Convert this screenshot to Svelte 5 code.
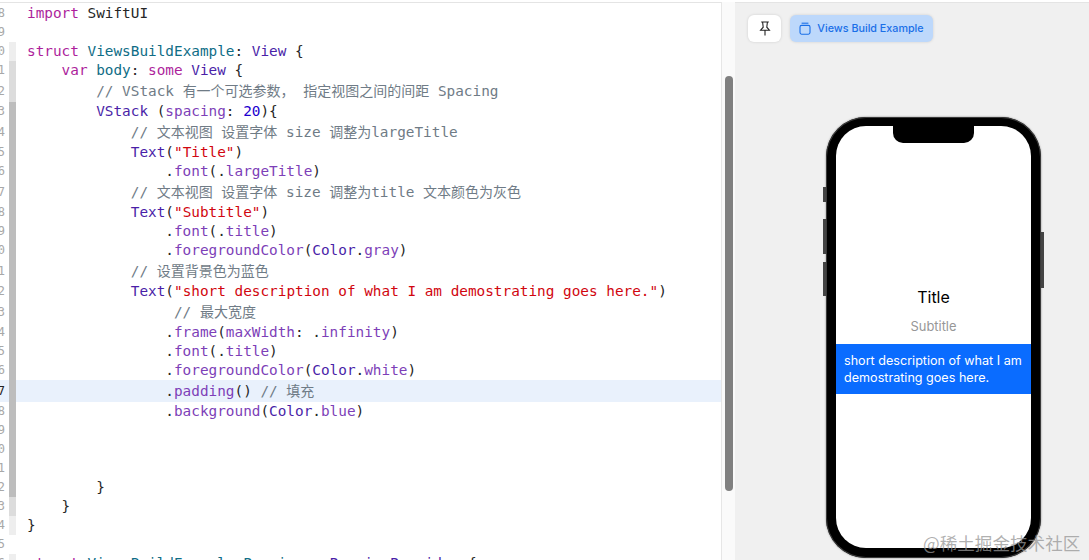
<script>
    const K = 'kw', T = 'ty', N = 'nm', M = 'me', C = 'cm', H = 'cm hz', S = 'st', D = 'dg', P = 'pl';

    // each row: fold level, tall (CJK comment rows render taller), tokens
    const rows = [
        { level: 0, toks: [[K, 'import'], [P, ' SwiftUI']] },
        { level: 0, toks: [] },
        { level: 1, toks: [[K, 'struct'], [P, ' '], [T, 'ViewsBuildExample'], [P, ': '], [N, 'View'], [P, ' {']] },
        { level: 2, toks: [[P, '    '], [K, 'var'], [P, ' '], [T, 'body'], [P, ': '], [K, 'some'], [P, ' '], [N, 'View'], [P, ' {']] },
        { level: 2, tall: true, toks: [[C, '        // VStack '], [H, '有一个可选参数，'], [C, ' '], [H, '指定视图之间的间距'], [C, ' Spacing']] },
        { level: 3, toks: [[P, '        '], [N, 'VStack'], [P, ' ('], [M, 'spacing'], [P, ': '], [D, '20'], [P, '){']] },
        { level: 3, tall: true, toks: [[C, '            // '], [H, '文本视图'], [C, ' '], [H, '设置字体'], [C, ' size '], [H, '调整为'], [C, 'largeTitle']] },
        { level: 3, toks: [[P, '            '], [N, 'Text'], [P, '('], [S, '"Title"'], [P, ')']] },
        { level: 3, toks: [[P, '                .'], [M, 'font'], [P, '(.'], [M, 'largeTitle'], [P, ')']] },
        { level: 3, tall: true, toks: [[C, '            // '], [H, '文本视图'], [C, ' '], [H, '设置字体'], [C, ' size '], [H, '调整为'], [C, 'title '], [H, '文本颜色为灰色']] },
        { level: 3, toks: [[P, '            '], [N, 'Text'], [P, '('], [S, '"Subtitle"'], [P, ')']] },
        { level: 3, toks: [[P, '                .'], [M, 'font'], [P, '(.'], [M, 'title'], [P, ')']] },
        { level: 3, toks: [[P, '                .'], [M, 'foregroundColor'], [P, '('], [N, 'Color'], [P, '.'], [M, 'gray'], [P, ')']] },
        { level: 3, tall: true, toks: [[C, '            // '], [H, '设置背景色为蓝色']] },
        { level: 3, toks: [[P, '            '], [N, 'Text'], [P, '('], [S, '"short description of what I am demostrating goes here."'], [P, ')']] },
        { level: 3, tall: true, toks: [[C, '                 // '], [H, '最大宽度']] },
        { level: 3, toks: [[P, '                .'], [M, 'frame'], [P, '('], [M, 'maxWidth'], [P, ': .'], [M, 'infinity'], [P, ')']] },
        { level: 3, toks: [[P, '                .'], [M, 'font'], [P, '(.'], [M, 'title'], [P, ')']] },
        { level: 3, toks: [[P, '                .'], [M, 'foregroundColor'], [P, '('], [N, 'Color'], [P, '.'], [M, 'white'], [P, ')']] },
        { level: 3, tall: true, active: true, toks: [[P, '                .'], [M, 'padding'], [P, '() '], [C, '// '], [H, '填充']] },
        { level: 3, toks: [[P, '                .'], [M, 'background'], [P, '('], [N, 'Color'], [P, '.'], [M, 'blue'], [P, ')']] },
        { level: 3, toks: [] },
        { level: 3, toks: [] },
        { level: 3, toks: [] },
        { level: 3, toks: [[P, '        }']] },
        { level: 2, toks: [[P, '    }']] },
        { level: 1, toks: [[P, '}']] },
        { level: 0, toks: [] },
        { level: 1, toks: [[K, 'struct'], [P, ' '], [T, 'ViewsBuildExample_Previews'], [P, ': '], [N, 'PreviewProvider'], [P, ' {']] }
    ];
</script>

<div class="app">
    <section class="editor">
        <div class="code">
            {#each rows as row, i}
                <div class="row" class:tall={row.tall} class:active={row.active}>
                    <div class="num"><span>{i + 8}</span></div>
                    <div class="fold l{row.level}"></div>
                    <div class="line">{#each row.toks as t}<span class={t[0]}>{t[1]}</span>{/each}</div>
                </div>
            {/each}
        </div>
        <div class="scrollbar"><div class="thumb"></div></div>
    </section>

    <section class="preview">
        <div class="tools">
            <button class="pin" aria-label="Pin">
                <svg width="12" height="15" viewBox="0 0 12 15" fill="none" stroke="#222" stroke-width="1.1">
                    <path d="M2.2 1h7.6M3.6 1l.6 5.2L1.6 9.2h8.8L7.8 6.2 8.4 1M6 9.2V14.5" />
                </svg>
            </button>
            <button class="chip">
                <svg width="12" height="13" viewBox="0 0 12 13" fill="none" stroke="#1a6fe8" stroke-width="1.1">
                    <rect x="1" y="3.4" width="10" height="8.8" rx="1.6" />
                    <path d="M2.6 1.2h6.8" />
                </svg>
                Views Build Example
            </button>
        </div>
        <div class="stage">
            <div class="phone">
                <i class="side vol0"></i>
                <i class="side vol1"></i>
                <i class="side vol2"></i>
                <i class="side power"></i>
                <div class="screen">
                    <div class="notch"></div>
                    <div class="title">Title</div>
                    <div class="subtitle">Subtitle</div>
                    <div class="band">short description of what I am demostrating goes here.</div>
                </div>
            </div>
        </div>
    </section>

    <div class="watermark">@稀土掘金技术社区</div>
</div>

<style>
    :global(body) {
        margin: 0;
        background: #fff;
    }

    .app {
        position: relative;
        display: flex;
        width: 1089px;
        height: 560px;
        overflow: hidden;
    }

    .editor {
        display: flex;
        width: 735px;
        flex: none;
        padding-top: 2px;
        box-sizing: border-box;
        background: #fff;
    }

    .code {
        flex: 1;
        min-width: 0;
        padding-top: 1px;
        border-top: 1px solid #e4e4e4;
        overflow: hidden;
    }

    .row {
        display: flex;
        height: 19px;
        line-height: 19px;
        font-family: "DejaVu Sans Mono", "Noto Sans CJK SC", monospace;
        font-size: 14.36px;
        color: #262626;
    }

    .row.tall {
        height: 22px;
        line-height: 22px;
    }

    .row.active {
        background: #e9f1fc;
    }

    .num {
        display: flex;
        justify-content: flex-end;
        width: 5px;
        overflow: hidden;
        flex: none;
        color: #a8a8a8;
        font-size: 12px;
    }

    .active .num {
        color: #222;
    }

    .fold {
        width: 7px;
        margin-left: 4px;
        flex: none;
    }

    .fold.l1 { background: #eeeeee; }
    .fold.l2 { background: #dcdcdc; }
    .fold.l3 { background: #bdbdbd; }

    .line {
        margin-left: 11px;
        white-space: pre;
    }

    .kw { color: #ad1f9c; }
    .ty { color: #0f6d86; }
    .nm { color: #4a1fa8; }
    .me { color: #7d3fb8; }
    .cm { color: #6f7b86; }
    .hz { font-size: 14px; }
    .st { color: #d1060f; }
    .dg { color: #1c00cf; }
    .pl { color: #262626; }

    .scrollbar {
        width: 14px;
        flex: none;
        padding-top: 74px;
        box-sizing: border-box;
        background: #fafafa;
        border-left: 1px solid #e6e6e6;
    }

    .thumb {
        width: 8px;
        height: 415px;
        margin-left: 3px;
        border-radius: 4px;
        background: #808080;
    }

    .preview {
        display: flex;
        flex-direction: column;
        flex: 1;
        min-width: 0;
        background: #f0f0f0;
        border-top: 1px solid #e4e4e4;
        margin-top: 2px;
    }

    .tools {
        display: flex;
        align-items: flex-start;
        gap: 9px;
        padding: 12px 0 0 13px;
    }

    .tools button {
        display: flex;
        align-items: center;
        justify-content: center;
        border: none;
        padding: 0;
        border-radius: 6px;
        box-shadow: 0 0 3px rgba(0, 0, 0, 0.14);
    }

    .pin {
        width: 33px;
        height: 27px;
        background: #fff;
    }

    .chip {
        gap: 6px;
        width: 143px;
        height: 27px;
        background: #bdd8fb;
        color: #1a6fe8;
        font-family: Inter, "Open Sans", sans-serif;
        font-size: 10.75px;
        font-weight: 500;
    }

    .stage {
        display: flex;
        padding: 75px 0 0 91px;
    }

    .phone {
        position: relative;
        width: 215px;
        height: 441px;
        padding: 9px 10px 10px;
        box-sizing: border-box;
        border-radius: 40px;
        background: #000;
        box-shadow: inset 0 0 0 1px #3a3a3a, 0 0 2px rgba(0, 0, 0, 0.5);
        flex: none;
    }

    .side {
        position: absolute;
        width: 3px;
        background: #444;
    }

    .vol0 { left: -3px; top: 70px; height: 15px; }
    .vol1 { left: -3px; top: 102px; height: 35px; }
    .vol2 { left: -3px; top: 145px; height: 34px; }
    .power { right: -3px; top: 115px; height: 56px; }

    .screen {
        position: relative;
        display: flex;
        flex-direction: column;
        justify-content: center;
        align-items: center;
        height: 100%;
        padding-top: 6px;
        box-sizing: border-box;
        border-radius: 30px;
        background: #fff;
        overflow: hidden;
        font-family: Inter, "Open Sans", sans-serif;
    }

    .notch {
        position: absolute;
        top: 0;
        left: 57px;
        width: 81px;
        height: 17px;
        border-radius: 0 0 10px 10px;
        background: #000;
    }

    .title {
        font-size: 16px;
        line-height: 22px;
        color: #000;
    }

    .subtitle {
        margin-top: 8px;
        font-size: 12.9px;
        line-height: 21px;
        color: #979797;
    }

    .band {
        margin-top: 7px;
        width: 100%;
        height: 50px;
        padding: 8px 4px 0 8px;
        box-sizing: border-box;
        background: #0a6cff;
        color: #fff;
        font-size: 12.6px;
        line-height: 17px;
    }

    .watermark {
        position: absolute;
        left: 923px;
        top: 532px;
        font-family: "Noto Sans CJK SC", sans-serif;
        font-size: 17.6px;
        line-height: 22px;
        white-space: nowrap;
        color: rgba(150, 150, 150, 0.75);
    }
</style>
